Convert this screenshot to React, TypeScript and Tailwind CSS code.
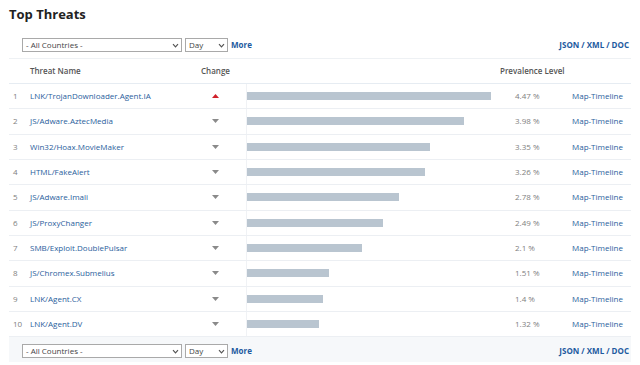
import React from 'react';

interface Threat {
  name: string;
  value: number;
  up?: boolean;
}

const threats: Threat[] = [
  { name: 'LNK/TrojanDownloader.Agent.IA', value: 4.47, up: true },
  { name: 'JS/Adware.AztecMedia', value: 3.98 },
  { name: 'Win32/Hoax.MovieMaker', value: 3.35 },
  { name: 'HTML/FakeAlert', value: 3.26 },
  { name: 'JS/Adware.Imali', value: 2.78 },
  { name: 'JS/ProxyChanger', value: 2.49 },
  { name: 'SMB/Exploit.DoublePulsar', value: 2.1 },
  { name: 'JS/Chromex.Submelius', value: 1.51 },
  { name: 'LNK/Agent.CX', value: 1.4 },
  { name: 'LNK/Agent.DV', value: 1.32 },
];

const MAX_BAR = 244;

const Caret = () => (
  <svg width="7" height="5" viewBox="0 0 7 5" className="ml-auto mr-[2px]">
    <path d="M1 1.2 L3.5 3.8 L6 1.2" fill="none" stroke="#555" strokeWidth="1.2" />
  </svg>
);

const Controls: React.FC = () => (
  <div className="flex items-center h-[14px]">
    <div className="ml-[13px] w-[160px] h-[14px] border border-[#a9a9a9] bg-white flex items-center pl-[3px] text-[#444]">
      <span>- All Countries -</span>
      <Caret />
    </div>
    <div className="ml-[3px] w-[43px] h-[14px] border border-[#a9a9a9] bg-white flex items-center pl-[3px] text-[#444]">
      <span>Day</span>
      <Caret />
    </div>
    <a className="ml-[3px] font-bold text-[#1d5aa0]">More</a>
    <div className="ml-auto mr-[2px] font-bold text-[#1d5aa0]">JSON / XML / DOC</div>
  </div>
);

const App: React.FC = () => {
  return (
    <div className="w-[640px] h-[365px] bg-white overflow-hidden text-[8px] leading-none" style={{ fontFamily: '"Open Sans", "Noto Sans", sans-serif' }}>
      <h1 className="pl-[9px] pt-[5px] text-[13px] font-bold text-[#222] leading-[18px]">Top Threats</h1>

      <div className="mx-[9px] mt-[15px]">
        <Controls />

        <div className="mt-[6px] border-t border-[#eef1f4]">
          <div className="grid grid-cols-[19px_167px_51px_254px_62px_1fr] h-[25px] items-center border-b border-[#e6ecf2] font-semibold text-[#555]">
            <div />
            <div className="pl-[2px]">Threat Name</div>
            <div className="pl-[6px]">Change</div>
            <div />
            <div className="col-span-2">Prevalence Level</div>
          </div>

          {threats.map((t, i) => (
            <div
              key={t.name}
              className="grid grid-cols-[19px_167px_51px_254px_62px_1fr] h-[25.33px] items-center border-b border-[#eceff3]"
            >
              <div className="pl-[4px] text-[#808080]">{i + 1}</div>
              <div className="pl-[2px] text-[#2a5e9c]">{t.name}</div>
              <div className="h-full flex items-center pl-[17px]">
                {t.up ? (
                  <svg width="7" height="4" viewBox="0 0 7 4">
                    <path d="M0 4 L3.5 0 L7 4 Z" fill="#d0202a" />
                  </svg>
                ) : (
                  <svg width="7" height="4" viewBox="0 0 7 4">
                    <path d="M0 0 L7 0 L3.5 4 Z" fill="#8a8a8a" />
                  </svg>
                )}
              </div>
              <div className="h-full flex items-center border-l border-[#f0f2f5]">
                <div
                  className="h-[8px] bg-[#b9c5d0]"
                  style={{ width: Math.round((t.value / 4.47) * MAX_BAR) }}
                />
              </div>
              <div className="pl-[15px] text-[#808080]">{t.value} %</div>
              <div className="pl-[10px] text-[#2a5e9c]">Map-Timeline</div>
            </div>
          ))}

          <div className="bg-[#f6f8fa] pt-[7px] pb-[4px]">
            <Controls />
          </div>
        </div>
      </div>
    </div>
  );
};

export default App;
